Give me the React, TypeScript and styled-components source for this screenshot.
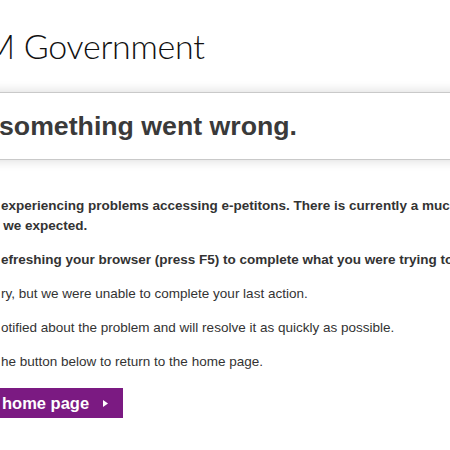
import React from 'react';
import styled, { createGlobalStyle } from 'styled-components';

const GlobalStyle = createGlobalStyle`
  html, body {
    margin: 0;
    padding: 0;
    background: #fff;
    overflow: hidden;
  }
  body {
    font-family: "Liberation Sans", Arial, Helvetica, sans-serif;
    color: #333;
  }
`;

const Page = styled.div`
  width: 450px;
  height: 450px;
  overflow: hidden;
  background: #fff;
`;

const Header = styled.header`
  height: 92px;
  display: flex;
  align-items: flex-start;
  padding-top: 24px;
  box-sizing: border-box;
`;

const Logo = styled.div`
  margin-left: -41px;
  font-family: Lato, "Open Sans", sans-serif;
  font-weight: 300;
  font-size: 34px;
  line-height: 44px;
  color: #111;
  letter-spacing: -0.3px;
  white-space: nowrap;
`;

const HeadingBar = styled.div`
  margin: 0 -20px;
  padding: 17px 20px 17px 19px;
  background: #fff;
  border-top: 1px solid #c9c9c9;
  border-bottom: 1px solid #c9c9c9;
  box-shadow: 0 0 11px rgba(0, 0, 0, 0.16);
  position: relative;
`;

const Heading = styled.h1`
  margin: 0;
  font-size: 26.7px;
  line-height: 32px;
  font-weight: bold;
  color: #3a3a3a;
  white-space: nowrap;
`;

const Content = styled.main`
  padding: 36px 0 0 1px;
`;

const Para = styled.p<{ $bold?: boolean }>`
  margin: 0 0 14px;
  font-size: 13.5px;
  line-height: 20px;
  font-weight: ${(p) => (p.$bold ? 'bold' : 'normal')};
  color: #333;
  white-space: nowrap;
`;

const Line = styled.span<{ $shift?: number }>`
  display: block;
  margin-left: ${(p) => p.$shift ?? 0}px;
`;

const HomeButton = styled.a`
  display: inline-flex;
  align-items: center;
  gap: 14px;
  height: 30px;
  margin-top: 2px;
  margin-left: -20px;
  padding: 0 15px 0 21px;
  background: #7b1a82;
  color: #fff;
  font-size: 16.5px;
  font-weight: bold;
  text-decoration: none;
  white-space: nowrap;
`;

const Arrow = () => (
  <svg width="5" height="7" viewBox="0 0 5 7" aria-hidden="true">
    <path d="M0 0 L5 3.5 L0 7 Z" fill="#fff" />
  </svg>
);

export default function App() {
  return (
    <Page>
      <GlobalStyle />
      <Header>
        <Logo>HM Government</Logo>
      </Header>
      <HeadingBar>
        <Heading>something went wrong.</Heading>
      </HeadingBar>
      <Content>
        <Para $bold>
          <Line>experiencing problems accessing e-petitons. There is currently a much</Line>
          <Line $shift={-30}>than we expected.</Line>
        </Para>
        <Para $bold>efreshing your browser (press F5) to complete what you were trying to</Para>
        <Para>ry, but we were unable to complete your last action.</Para>
        <Para>otified about the problem and will resolve it as quickly as possible.</Para>
        <Para>he button below to return to the home page.</Para>
        <HomeButton href="#">
          home page <Arrow />
        </HomeButton>
      </Content>
    </Page>
  );
}
